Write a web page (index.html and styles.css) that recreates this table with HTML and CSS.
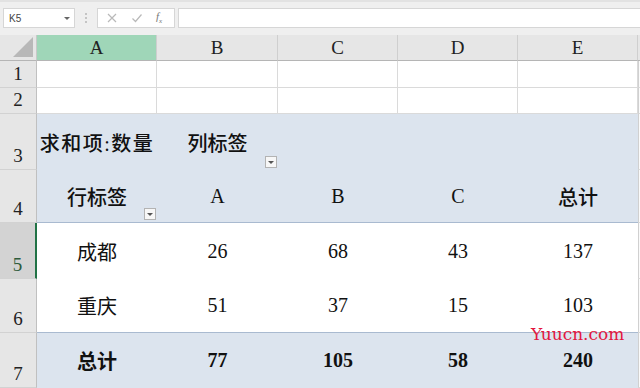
FILE: index.html
```html
<!DOCTYPE html>
<html lang="zh-CN">
<head>
<meta charset="utf-8">
<title>数据透视表</title>
<link rel="stylesheet" href="styles.css">
</head>
<body>
<div class="app">
  <div class="toolbar">
    <div class="namebox"><span class="nb-text">K5</span><span class="nb-arrow"></span></div>
    <div class="sep"><span></span><span></span><span></span></div>
    <div class="fxbox">
      <svg class="ic" width="12" height="12" viewBox="0 0 12 12"><path d="M2 2 L10 10 M10 2 L2 10" stroke="#b9b9b9" stroke-width="1.2" fill="none"/></svg>
      <svg class="ic" width="12" height="12" viewBox="0 0 12 12"><path d="M1.5 6.5 L4.5 9.5 L10.5 2.5" stroke="#b9b9b9" stroke-width="1.2" fill="none"/></svg>
      <span class="fx">f<sub>x</sub></span>
    </div>
    <div class="formula"></div>
  </div>

  <div class="sheet">
    <div class="corner"><span class="tri"></span></div>
    <div class="colh sel">A</div>
    <div class="colh">B</div>
    <div class="colh">C</div>
    <div class="colh">D</div>
    <div class="colh">E</div>
    <div class="colh last"></div>

    <div class="rowh">1</div>
    <div class="cell"></div><div class="cell"></div><div class="cell"></div><div class="cell"></div><div class="cell"></div><div class="cell last"></div>

    <div class="rowh">2</div>
    <div class="cell"></div><div class="cell"></div><div class="cell"></div><div class="cell"></div><div class="cell"></div><div class="cell last"></div>

    <div class="rowh">3</div>
    <div class="pv hd wide">求和项:数量</div>
    <div class="pv hd">列标签<span class="dd"></span></div>
    <div class="pv"></div><div class="pv"></div><div class="pv"></div><div class="cell last"></div>

    <div class="rowh">4</div>
    <div class="pv hd line">行标签<span class="dd"></span></div>
    <div class="pv hd line">A</div>
    <div class="pv hd line">B</div>
    <div class="pv hd line">C</div>
    <div class="pv hd line">总计</div>
    <div class="cell last"></div>

    <div class="rowh cur">5</div>
    <div class="wh">成都</div>
    <div class="wh">26</div>
    <div class="wh">68</div>
    <div class="wh">43</div>
    <div class="wh">137</div>
    <div class="cell last"></div>

    <div class="rowh">6</div>
    <div class="wh line">重庆</div>
    <div class="wh line">51</div>
    <div class="wh line">37</div>
    <div class="wh line">15</div>
    <div class="wh line">103</div>
    <div class="cell last"></div>

    <div class="rowh">7</div>
    <div class="pv tot">总计</div>
    <div class="pv tot">77</div>
    <div class="pv tot">105</div>
    <div class="pv tot">58</div>
    <div class="pv tot">240</div>
    <div class="cell last"></div>
  </div>

  <div class="watermark">Yuucn.com</div>
</div>
</body>
</html>
```

FILE: styles.css
```css
* { box-sizing: border-box; }
html, body { margin: 0; padding: 0; }
body { width: 640px; height: 388px; overflow: hidden; background: #ffffff; }

.app {
  position: relative;
  width: 640px;
  height: 388px;
  font-family: "Liberation Serif", "Noto Sans CJK SC", serif;
  color: #111;
}

/* ---------- formula bar ---------- */
.toolbar {
  height: 35px;
  background: #efefef;
  border-top: 2px solid #e2e2e2;
  padding-top: 6px;
  display: flex;
  align-items: flex-start;
}
.namebox {
  margin-left: 3px;
  width: 72px;
  height: 20px;
  background: #fff;
  border: 1px solid #d6d6d6;
  display: flex;
  align-items: center;
  justify-content: space-between;
  padding: 0 4px 0 5px;
}
.nb-text {
  font-family: "Liberation Sans", "Noto Sans", sans-serif;
  font-size: 10px;
  color: #444;
}
.nb-arrow {
  width: 0; height: 0;
  border-left: 3px solid transparent;
  border-right: 3px solid transparent;
  border-top: 3px solid #666;
}
.sep {
  width: 22px;
  height: 20px;
  display: flex;
  flex-direction: column;
  align-items: center;
  justify-content: center;
  gap: 2px;
}
.sep span { width: 2px; height: 2px; background: #c4c4c4; }
.fxbox {
  width: 78px;
  height: 20px;
  background: #fff;
  border: 1px solid #d6d6d6;
  display: flex;
  align-items: center;
  padding-left: 8px;
  gap: 13px;
}
.fx {
  font-family: "Liberation Serif", serif;
  font-style: italic;
  font-size: 11px;
  color: #777;
  line-height: 1;
}
.fx sub { font-size: 7px; }
.formula {
  margin-left: 3px;
  flex: 1;
  height: 20px;
  background: #fff;
  border: 1px solid #d6d6d6;
  border-right: none;
}

/* ---------- sheet ---------- */
.sheet {
  display: grid;
  grid-template-columns: 37px 120px 121px 120px 120px 120px 2px;
  grid-template-rows: 26px 27px 26px 56px 53px 56px 54px 55px;
}
.corner {
  background: #e6e6e6;
  border-right: 1px solid #c8c8c8;
  border-bottom: 1px solid #b5b5b5;
  position: relative;
}
.tri {
  position: absolute;
  right: 3px;
  bottom: 3px;
  width: 0; height: 0;
  border-left: 20px solid transparent;
  border-bottom: 20px solid #b8b8b8;
}
.colh {
  background: #e6e6e6;
  border-right: 1px solid #cfcfcf;
  border-bottom: 1px solid #b5b5b5;
  display: flex;
  align-items: center;
  justify-content: center;
  font-size: 19px;
  color: #222;
  padding-top: 1px;
}
.colh.sel { background: #9fd6b8; }
.colh.last { border-right: none; }

.rowh {
  background: #e6e6e6;
  border-right: 1px solid #c0c0c0;
  border-bottom: 1px solid #d2d2d2;
  display: flex;
  align-items: flex-end;
  justify-content: center;
  font-size: 19px;
  color: #222;
  padding-bottom: 2px;
}
.rowh.cur {
  background: #d3d3d3;
  border-right: 2px solid #217346;
  color: #2d5b3b;
}

.cell {
  background: #fff;
  border-right: 1px solid #dadada;
  border-bottom: 1px solid #dadada;
}
.cell.last {
  border-right: none;
  border-left: 1px solid #d0d0d0;
  background: #fafafa;
}

.pv, .wh {
  display: flex;
  align-items: center;
  justify-content: center;
  font-size: 20px;
  position: relative;
  white-space: nowrap;
}
.pv { background: #dce4ee; }
.wh { background: #ffffff; }
.line { border-bottom: 1px solid #a9bad0; }
.hd { font-weight: 500; }
.wide { letter-spacing: 1.5px; }
.tot { font-weight: bold; }

.dd {
  position: absolute;
  right: 1px;
  bottom: 2px;
  width: 12px;
  height: 12px;
  background: #f7f7f7;
  border: 1px solid #b3b3b3;
  display: flex;
  align-items: center;
  justify-content: center;
}
.dd::after {
  content: "";
  width: 0; height: 0;
  border-left: 3px solid transparent;
  border-right: 3px solid transparent;
  border-top: 3px solid #555;
}

.watermark {
  position: absolute;
  left: 531px;
  top: 324px;
  font-family: "DejaVu Serif", "Liberation Serif", serif;
  font-size: 17px;
  color: #e3173f;
}
```
